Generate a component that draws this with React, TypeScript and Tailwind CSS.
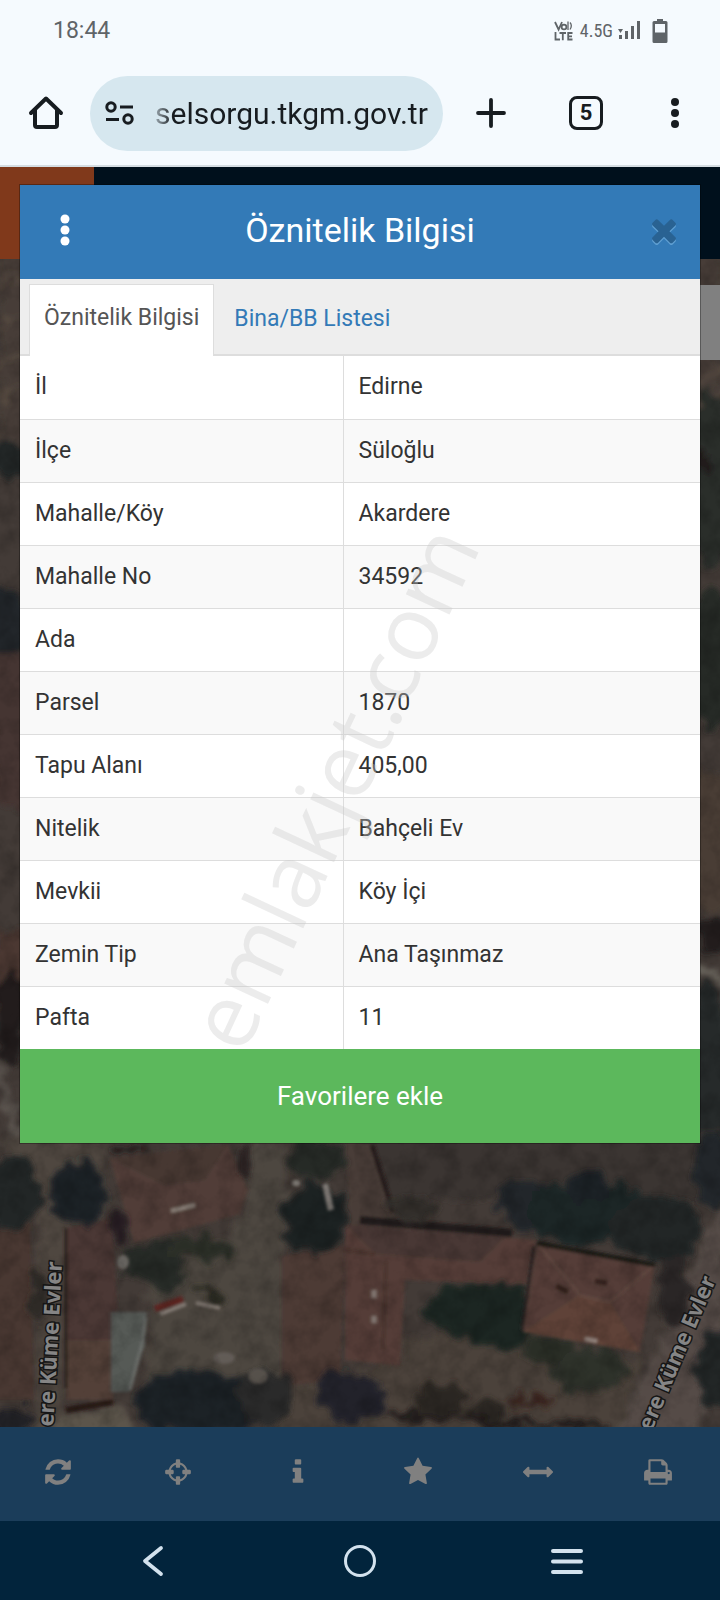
import { useState } from 'react'

const rows = [
  ['İl', 'Edirne'],
  ['İlçe', 'Süloğlu'],
  ['Mahalle/Köy', 'Akardere'],
  ['Mahalle No', '34592'],
  ['Ada', ''],
  ['Parsel', '1870'],
  ['Tapu Alanı', '405,00'],
  ['Nitelik', 'Bahçeli Ev'],
  ['Mevkii', 'Köy İçi'],
  ['Zemin Tip', 'Ana Taşınmaz'],
  ['Pafta', '11'],
]

const tabs = ['Öznitelik Bilgisi', 'Bina/BB Listesi']

const tools = [
  {
    label: 'Yenile',
    path: 'M1639 1056q0 5-1 7-64 268-268 434.5t-478 166.5q-146 0-282.5-55t-243.5-157l-129 129q-19 19-45 19t-45-19-19-45v-448q0-26 19-45t45-19h448q26 0 45 19t19 45-19 45l-137 137q71 66 161 102t187 36q134 0 250-65t186-179q11-17 53-117 8-23 30-23h192q13 0 22.5 9.5t9.5 22.5zm25-800v448q0 26-19 45t-45 19h-448q-26 0-45-19t-19-45 19-45l138-138q-148-137-349-137-134 0-250 65t-186 179q-11 17-53 117-8 23-30 23h-199q-13 0-22.5-9.5t-9.5-22.5v-7q65-268 270-434.5t480-166.5q146 0 284 55.5t245 156.5l130-129q19-19 45-19t45 19 19 45z',
  },
  {
    label: 'Konum',
    path: 'M1325 1024h-109q-26 0-45-19t-19-45v-128q0-26 19-45t45-19h109q-32-108-112.5-188.5t-188.5-112.5v109q0 26-19 45t-45 19h-128q-26 0-45-19t-19-45v-109q-108 32-188.5 112.5t-112.5 188.5h109q26 0 45 19t19 45v128q0 26-19 45t-45 19h-109q32 108 112.5 188.5t188.5 112.5v-109q0-26 19-45t45-19h128q26 0 45 19t19 45v109q108-32 188.5-112.5t112.5-188.5zm339-192v128q0 26-19 45t-45 19h-143q-37 161-154.5 278.5t-278.5 154.5v143q0 26-19 45t-45 19h-128q-26 0-45-19t-19-45v-143q-161-37-278.5-154.5t-154.5-278.5h-143q-26 0-45-19t-19-45v-128q0-26 19-45t45-19h143q37-161 154.5-278.5t278.5-154.5v-143q0-26 19-45t45-19h128q26 0 45 19t19 45v143q161 37 278.5 154.5t154.5 278.5h143q26 0 45 19t19 45z',
  },
  {
    label: 'Bilgi',
    path: 'M1216 1344v128q0 26-19 45t-45 19h-512q-26 0-45-19t-19-45v-128q0-26 19-45t45-19h64v-384h-64q-26 0-45-19t-19-45v-128q0-26 19-45t45-19h384q26 0 45 19t19 45v576h64q26 0 45 19t19 45zm-128-1152v192q0 26-19 45t-45 19h-256q-26 0-45-19t-19-45v-192q0-26 19-45t45-19h256q26 0 45 19t19 45z',
  },
  {
    label: 'Favoriler',
    path: 'M1728 647q0 22-26 48l-363 354 86 500q1 7 1 20 0 21-10.5 35.5t-30.5 14.5q-19 0-40-12l-449-236-449 236q-22 12-40 12-21 0-31.5-14.5t-10.5-35.5q0-6 2-20l86-500-364-354q-25-27-25-48 0-37 56-46l502-73 225-455q19-41 49-41t49 41l225 455 502 73q56 9 56 46z',
  },
  {
    label: 'Ölçüm',
    path: 'M1792 896q0 26-19 45l-256 256q-19 19-45 19t-45-19-19-45v-128h-1024v128q0 26-19 45t-45 19-45-19l-256-256q-19-19-19-45t19-45l256-256q19-19 45-19t45 19 19 45v128h1024v-128q0-26 19-45t45-19 45 19l256 256q19 19 19 45z',
  },
  {
    label: 'Yazdır',
    path: 'M448 1536h896v-256h-896v256zm0-640h896v-384h-160q-40 0-68-28t-28-68v-160h-640v640zm1152 64q0-26-19-45t-45-19-45 19-19 45 19 45 45 19 45-19 19-45zm128 0v416q0 13-9.5 22.5t-22.5 9.5h-224v160q0 40-28 68t-68 28h-960q-40 0-68-28t-28-68v-160h-224q-13 0-22.5-9.5t-9.5-22.5v-416q0-79 56.5-135.5t135.5-56.5h64v-544q0-40 28-68t68-28h672q40 0 88 20t76 48l152 152q28 28 48 76t20 88v256h64q79 0 135.5 56.5t56.5 135.5z',
  },
]

const TIMES =
  'M1490 1322q0 40-28 68l-136 136q-28 28-68 28t-68-28l-294-294-294 294q-28 28-68 28t-68-28l-136-136q-28-28-28-68t28-68l294-294-294-294q-28-28-28-68t28-68l136-136q28-28 68-28t68 28l294 294 294-294q28-28 68-28t68 28l136 136q28 28 28 68t-28 68l-294 294 294 294q28 28 28 68z'

function StatusBar() {
  return (
    <div className="flex h-[62px] items-center justify-between pr-[52px] pl-[53px] text-[#5f6468]">
      <span className="text-[23px] leading-7">18:44</span>
      <div className="flex items-center">
        <svg className="h-5 w-[19px]" viewBox="0 0 19 20" fill="none" stroke="currentColor" strokeWidth="1.8">
          <path d="M1 1l3.6 7.500L8 1" />
          <circle cx="10" cy="6" r="2.4" />
          <path d="M14 0.500v8.500M16 1.500q2.600 3 0 7" strokeWidth="1.3" />
          <path d="M1.500 11v7.500H6M5.500 12H12M8.800 12v7.200M18.500 12h-4.300v6.500h4.300M14 15.300h4" />
        </svg>
        <span className="ml-[7px] font-['Roboto_Condensed',Roboto,sans-serif] text-[18px] leading-6">4.5G</span>
        <svg className="ml-1 h-[22px] w-[23px]" viewBox="0 0 23 22" fill="currentColor">
          <path d="M1 9h5L3.500 13zM2 15h3v4H2zM8 11h3v8H8zM14 6h3v13h-3zM20 1h3v18h-3z" />
        </svg>
        <svg className="ml-3 h-6 w-4" viewBox="0 0 16 24">
          <path
            fill="currentColor"
            fillRule="evenodd"
            d="M5 0h6v2h3q1.500 0 1.500 1.500v19q0 1.500-1.500 1.500H2q-1.500 0-1.500-1.500v-19Q0.500 2 2 2h3zM3 5v8.500h10V5z"
          />
        </svg>
      </div>
    </div>
  )
}

function BrowserBar() {
  return (
    <div className="flex h-[105px] items-center border-b-2 border-[#d5dde2] pt-px pr-[25px] pb-[2px] pl-[22px] text-[#171c20]">
      <button aria-label="Ana sayfa" className="flex h-12 w-12 items-center justify-center">
        <svg className="h-9 w-9" viewBox="0 0 36 36" fill="none" stroke="currentColor" strokeWidth="4" strokeLinejoin="round" strokeLinecap="round">
          <path d="M3 18L18 3.500 33 18M7 15v15q0 2 2 2h18q2 0 2-2V15" />
        </svg>
      </button>
      <div className="ml-5 flex h-[75px] min-w-0 flex-1 items-center rounded-full bg-[#d6e7ef] pr-2 pl-[15px]">
        <svg className="h-7 w-[29px] shrink-0" viewBox="0 0 29 28" fill="none" stroke="currentColor" strokeWidth="3">
          <circle cx="6" cy="8" r="4.200" />
          <circle cx="23" cy="20" r="4.200" />
          <path d="M15 8h13M1 20.500h13" />
        </svg>
        <input
          aria-label="Adres çubuğu"
          readOnly
          value="selsorgu.tkgm.gov.tr"
          className="ml-[21px] h-10 w-full min-w-0 bg-transparent text-[30px] [mask-image:linear-gradient(90deg,rgba(0,0,0,0.3),#000_18px)] outline-none"
        />
      </div>
      <button aria-label="Yeni sekme" className="ml-6 flex h-12 w-12 items-center justify-center">
        <svg className="h-[30px] w-[30px]" viewBox="0 0 30 30" stroke="currentColor" strokeWidth="3.800" strokeLinecap="round">
          <path d="M15 2v26M2 15h26" />
        </svg>
      </button>
      <button aria-label="Sekmeler" className="ml-[54px] flex h-[34px] w-[34px] items-center justify-center rounded-[8px] border-[3px] border-current text-[22px] leading-none font-bold">
        5
      </button>
      <button aria-label="Menü" className="ml-[52px] flex h-12 w-10 items-center justify-center">
        <svg className="h-8 w-2" viewBox="0 0 8 32" fill="currentColor">
          <circle cx="4" cy="5" r="4" />
          <circle cx="4" cy="16" r="4" />
          <circle cx="4" cy="27" r="4" />
        </svg>
      </button>
    </div>
  )
}

function SatelliteMap() {
  return (
    <svg className="absolute inset-0 h-full w-full" viewBox="0 259 720 1168" preserveAspectRatio="xMidYMin slice">
      <defs>
        <filter id="rough" x="0" y="0" width="100%" height="100%">
          <feTurbulence type="fractalNoise" baseFrequency="0.06" numOctaves="3" seed="4" result="n" />
          <feDisplacementMap in="SourceGraphic" in2="n" scale="26" xChannelSelector="R" yChannelSelector="G" />
          <feGaussianBlur stdDeviation="2.600" />
        </filter>
        <filter id="soft" x="-10%" y="-10%" width="120%" height="120%">
          <feGaussianBlur stdDeviation="1.400" />
        </filter>
        <filter id="grain" x="0" y="0" width="100%" height="100%">
          <feTurbulence type="fractalNoise" baseFrequency="0.05" numOctaves="4" seed="9" />
          <feColorMatrix values="0 0 0 0 0  0 0 0 0 0  0 0 0 0 0  1.800 0 0 0 -0.700" />
        </filter>
      </defs>
      <rect y="240" width="720" height="1200" fill="#433b37" />

      {/* gardens and ground */}
      <g filter="url(#rough)">
        <rect y="250" width="720" height="200" fill="#463c37" />
        <path d="M-10 290L30 275M-10 330L30 312M-10 370L30 350M-10 400L30 385M690 385L740 360M690 405L740 385" stroke="#54483f" strokeWidth="5" />
        <ellipse cx="8" cy="460" rx="24" ry="16" fill="#202525" />
        <ellipse cx="6" cy="625" rx="25" ry="34" fill="#202829" />
        <rect x="-5" y="655" width="35" height="150" fill="#443531" />
        <rect x="-5" y="930" width="35" height="95" fill="#4c3731" />
        <ellipse cx="10" cy="1020" rx="14" ry="50" fill="#241e1d" />
        <path d="M-5 1060L20 1140" stroke="#5c554f" strokeWidth="9" />
        <ellipse cx="710" cy="480" rx="24" ry="90" fill="#2b2f2b" />
        <ellipse cx="702" cy="460" rx="8" ry="12" fill="#241d1b" />
        <ellipse cx="712" cy="660" rx="24" ry="70" fill="#252b27" />
        <rect x="690" y="770" width="40" height="140" fill="#493d35" />
        <path d="M690 965l35 15" stroke="#66625a" strokeWidth="9" />
        <ellipse cx="714" cy="935" rx="16" ry="20" fill="#211c1d" />
        <ellipse cx="708" cy="1075" rx="26" ry="90" fill="#282a29" />
        <rect x="355" y="1130" width="365" height="70" fill="#3b3631" />
        <path d="M0 1140H105L108 1220 75 1230 60 1440H35L42 1200z" fill="#4f4741" />
        <path d="M248 1140H285V1395L145 1385 150 1280 215 1245 245 1215z" fill="#4e4640" />
        <path d="M400 1340L525 1335 640 1360 620 1440H280V1385L400 1360z" fill="#4b423b" />
        <path d="M725 1200L690 1270 655 1350 615 1440H700L725 1340z" fill="#544c46" />
        <path d="M55 1412L120 1405 135 1440H50z" fill="#5c544c" />
      </g>

      {/* roofs */}
      <g filter="url(#soft)">
        <path d="M-5 1228L30 1222 34 1400H-5z" fill="#483731" />
        <path d="M66 1228L112 1218 118 1315 113 1400H66z" fill="#4b3935" />
        <path d="M66 1340L112 1340 113 1400H66z" fill="#534038" />
        <path d="M66 1228V1388" stroke="#2b211d" strokeWidth="3" />
        <path d="M66 1410L113 1402" stroke="#2c1a16" strokeWidth="6" />
        <path d="M110 1158L228 1144 248 1190 240 1214 134 1243 126 1215z" fill="#513d37" />
        <path d="M110 1158L228 1144 205 1180 165 1185z" fill="#473733" />
        <path d="M171 1211l24-6" stroke="#8a8078" strokeWidth="4" />
        <path d="M111 1312H147L145 1345 129 1392H111z" fill="#575a57" />
        <path d="M146 1318L142 1345 130 1390" fill="none" stroke="#6d706c" strokeWidth="3" />
        <path d="M282 1256L345 1245 340 1380 282 1386z" fill="#4d3a36" />
        <path d="M345 1140L373 1145 393 1215 350 1228z" fill="#4a3d38" />
        <path d="M372 1145L393 1212" stroke="#281e1c" strokeWidth="5" />
        <path d="M345 1224L505 1237 537 1240 527 1286 405 1280 400 1366 345 1360z" fill="#543e38" />
        <path d="M345 1224L505 1237 480 1262 375 1254z" fill="#4a3834" />
        <path d="M360 1220L512 1233" stroke="#211b1a" strokeWidth="8" />
        <path d="M386 1262L383 1350M375 1254L345 1250" stroke="#4b342f" strokeWidth="4" />
        <path d="M374 1290v8M374 1316v7" stroke="#80756f" strokeWidth="5" />
      </g>

      {/* trees */}
      <g filter="url(#rough)">
        <ellipse cx="12" cy="1192" rx="28" ry="36" fill="#212526" />
        <ellipse cx="78" cy="1196" rx="28" ry="34" fill="#1e2326" />
        <ellipse cx="120" cy="1228" rx="8" ry="22" fill="#261f20" />
        <ellipse cx="38" cy="1295" rx="9" ry="28" fill="#2e2a25" />
        <ellipse cx="152" cy="1262" rx="30" ry="20" fill="#272c27" />
        <ellipse cx="200" cy="1248" rx="34" ry="14" fill="#292d28" />
        <ellipse cx="168" cy="1278" rx="16" ry="10" fill="#272c28" />
        <path d="M105 1146L150 1146 120 1158z" fill="#1f1718" />
        <ellipse cx="244" cy="1162" rx="8" ry="18" fill="#2a2223" />
        <ellipse cx="316" cy="1160" rx="30" ry="20" fill="#262b27" />
        <ellipse cx="314" cy="1218" rx="34" ry="34" fill="#1e2124" />
        <ellipse cx="202" cy="1402" rx="68" ry="32" fill="#1c2026" />
        <ellipse cx="264" cy="1398" rx="28" ry="28" fill="#2b2b29" />
        <ellipse cx="14" cy="1420" rx="20" ry="18" fill="#212326" />
        <ellipse cx="350" cy="1395" rx="34" ry="26" fill="#20242a" />
        <ellipse cx="440" cy="1400" rx="26" ry="18" fill="#2b2522" />
        <ellipse cx="485" cy="1412" rx="20" ry="13" fill="#2a2521" />
        <path d="M385 1415L610 1426" stroke="#241e1c" strokeWidth="7" />
        <path d="M510 1402L550 1403" stroke="#39241f" strokeWidth="7" />
        <ellipse cx="526" cy="1205" rx="28" ry="26" fill="#202529" />
        <ellipse cx="590" cy="1212" rx="62" ry="32" fill="#1f2626" />
        <ellipse cx="655" cy="1228" rx="48" ry="32" fill="#212727" />
        <ellipse cx="590" cy="1188" rx="24" ry="14" fill="#1d2125" />
        <ellipse cx="410" cy="1208" rx="28" ry="10" fill="#322d2a" />
        <ellipse cx="462" cy="1310" rx="36" ry="26" fill="#1f2624" />
        <ellipse cx="500" cy="1316" rx="38" ry="34" fill="#1f2524" />
        <ellipse cx="550" cy="1350" rx="28" ry="14" fill="#2a2d28" />
        <ellipse cx="590" cy="1370" rx="40" ry="22" fill="#2d302a" />
        <ellipse cx="674" cy="1290" rx="16" ry="36" fill="#292625" />
        <ellipse cx="712" cy="1170" rx="20" ry="40" fill="#24282a" />
        <ellipse cx="717" cy="1372" rx="20" ry="40" fill="#242528" />
        <path d="M190 1290l18 4 16 10" stroke="#2c2922" strokeWidth="7" fill="none" />
      </g>

      <g filter="url(#soft)">
        <path d="M537 1243L655 1265 640 1352 523 1332z" fill="#543e38" />
        <path d="M523 1332L580 1295 610 1302 640 1352z" fill="#5f4339" />
        <path d="M537 1243L580 1295 610 1302 655 1265" fill="none" stroke="#624a42" strokeWidth="2" />
        <path d="M537 1243L655 1265" stroke="#1f1a19" strokeWidth="5" />
        <path d="M534 1246L522 1330" stroke="#2a2220" strokeWidth="3" />
        <path d="M556 1286l12 6M595 1281l12 2" stroke="#35221e" strokeWidth="5" />
        <path d="M585 1339l12 2" stroke="#988982" strokeWidth="4" />
        <path d="M155 1309l28-10" stroke="#5e2522" strokeWidth="7" />
        <path d="M160 1314l26-10M196 1303l24 5" stroke="#847b74" strokeWidth="4" />
        <path d="M325 1184l6 26" stroke="#827d78" strokeWidth="6" />
        <ellipse cx="296" cy="1183" rx="4" ry="3" fill="#8a8680" />
        <ellipse cx="123" cy="1262" rx="6" ry="7" fill="#66635e" />
        <ellipse cx="224" cy="1358" rx="11" ry="6" fill="#625b56" />
        <ellipse cx="258" cy="1376" rx="10" ry="8" fill="#56514c" />
      </g>

      <rect y="240" width="720" height="1200" filter="url(#grain)" opacity="0.22" />

      <g
        className="font-['Noto_Sans',sans-serif] text-[22px] font-bold"
        fill="#858585"
        stroke="#161616"
        strokeWidth="3"
        paintOrder="stroke"
        textAnchor="end"
      >
        <text transform="translate(62 1262) rotate(-87)">ere Küme Evler</text>
        <text transform="translate(716 1280) rotate(-67)">ere Küme Evler</text>
      </g>
    </svg>
  )
}

function MapPage() {
  return (
    <div className="absolute inset-0 flex flex-col">
      <div className="h-[92px] bg-[#00101c]">
        <div className="h-full w-[94px] bg-[#80391b]" />
      </div>
      <div className="relative flex-1 overflow-hidden">
        <SatelliteMap />
        <div className="absolute top-[26px] right-0 h-[75px] w-10 bg-[#808080]" />
      </div>
      <div className="grid h-[94px] grid-cols-6 bg-[#1b3d5a] text-[#808080]">
        {tools.map((tool) => (
          <button key={tool.label} aria-label={tool.label} className="flex items-center justify-center pr-1 pb-1">
            <svg className="h-[30px] w-[30px]" viewBox="0 0 1792 1792" fill="currentColor">
              <path d={tool.path} />
            </svg>
          </button>
        ))}
      </div>
    </div>
  )
}

function ParcelDialog() {
  const [active, setActive] = useState(0)

  return (
    <section role="dialog" aria-label="Öznitelik Bilgisi" className="relative mx-5 mt-[18px] bg-white shadow-[0_0_0_1px_rgba(0,0,0,0.3)]">
      <header className="flex h-[94px] items-center justify-between bg-[#337ab7] px-[18px] pb-1 text-white">
        <button aria-label="Seçenekler" className="flex h-12 w-[54px] items-center justify-center">
          <svg className="h-8 w-[10px]" viewBox="0 0 10 32" fill="currentColor">
            <circle cx="5" cy="5" r="4.500" />
            <circle cx="5" cy="16" r="4.500" />
            <circle cx="5" cy="27" r="4.500" />
          </svg>
        </button>
        <h1 className="text-[34px] leading-10">Öznitelik Bilgisi</h1>
        <button aria-label="Kapat" className="flex h-12 w-[54px] items-center justify-end">
          <svg className="h-9 w-9 shrink-0" viewBox="0 0 1792 1792">
            <path d={TIMES} fill="#5f9fd2" transform="translate(0 90)" />
            <path d={TIMES} fill="#296292" />
          </svg>
        </button>
      </header>

      <div role="tablist" className="flex h-[77px] items-end border-b-2 border-[#ddd] bg-[#eee] pl-[9px]">
        {tabs.map((tab, i) => (
          <button
            key={tab}
            role="tab"
            aria-selected={active === i}
            onClick={() => setActive(i)}
            className={
              active === i
                ? '-mb-[2px] h-[72px] border border-b-0 border-[#ddd] bg-white px-[14px] pb-1 text-[23px] text-[#555]'
                : 'h-[70px] px-5 text-[23px] text-[#337ab7]'
            }
          >
            {tab}
          </button>
        ))}
      </div>

      <table className="w-full border-collapse text-[23px] leading-7 text-[#333]">
        <tbody>
          {rows.map(([name, value]) => (
            <tr key={name} className="h-[63px] border-t border-[#ddd] first:border-t-0 even:bg-[#f9f9f9]">
              <td className="w-[323px] border-r border-[#ddd] px-[15px]">{name}</td>
              <td className="px-[15px]">{value}</td>
            </tr>
          ))}
        </tbody>
      </table>

      <button className="h-[94px] w-full bg-[#5cb85c] text-[26px] text-white">Favorilere ekle</button>
    </section>
  )
}

function NavBar() {
  return (
    <nav className="flex h-[79px] items-center justify-between bg-[#02243c] px-[129px] text-[#d3e2ee]">
      <button aria-label="Geri" className="flex h-12 w-12 items-center justify-center">
        <svg className="h-8 w-6" viewBox="0 0 24 32" fill="none" stroke="currentColor" strokeWidth="3.800" strokeLinecap="round" strokeLinejoin="round">
          <path d="M20 3L4 16l16 13" />
        </svg>
      </button>
      <button aria-label="Ana ekran" className="flex h-12 w-12 items-center justify-center">
        <span className="h-8 w-8 rounded-full border-[3px] border-current" />
      </button>
      <button aria-label="Son uygulamalar" className="flex h-12 w-12 items-center justify-center">
        <svg className="h-8 w-8" viewBox="0 0 32 32" stroke="currentColor" strokeWidth="4" strokeLinecap="round">
          <path d="M2 6h28M2 16.500h28M2 27h28" />
        </svg>
      </button>
    </nav>
  )
}

export default function App() {
  return (
    <div className="relative flex min-h-screen flex-col overflow-hidden bg-[#f5fafe] font-[Roboto,sans-serif]">
      <StatusBar />
      <BrowserBar />
      <main className="relative flex-1">
        <MapPage />
        <ParcelDialog />
      </main>
      <NavBar />
      <div className="pointer-events-none absolute inset-0 flex items-center justify-center">
        <span className="-rotate-65 pb-16 font-['Open_Sans',sans-serif] text-[90px] leading-none text-[#c8c8c8]/35">emlakjet.com</span>
      </div>
    </div>
  )
}
